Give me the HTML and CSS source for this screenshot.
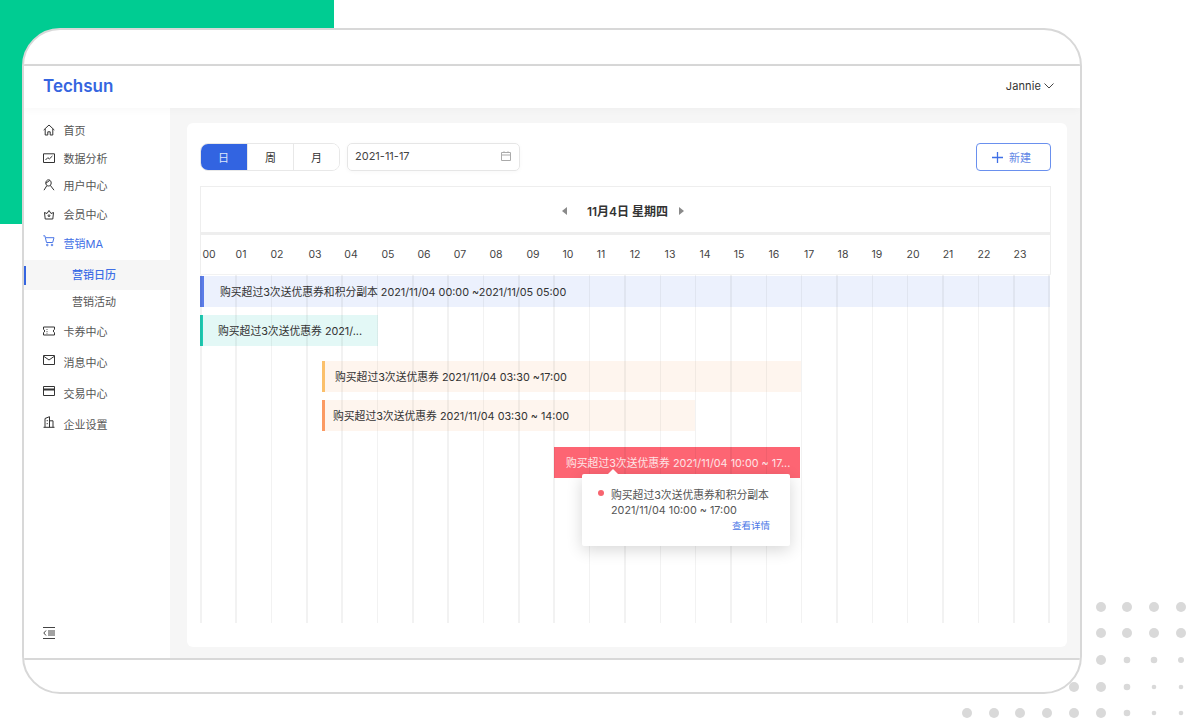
FILE: index.html
```html
<!DOCTYPE html>
<html lang="zh-CN">
<head>
    <meta charset="UTF-8">
    <title>Techsun</title>
    <link rel="stylesheet" href="styles.css">
</head>
<body>
    <div class="green-block"></div>

    <svg class="dots" width="230" height="125" viewBox="956 598 230 125" fill="#d9d9d9">
        <circle cx="1101" cy="607" r="5"/><circle cx="1127" cy="607" r="5"/><circle cx="1154" cy="607" r="5"/><circle cx="1181" cy="607" r="5"/>
        <circle cx="1101" cy="633" r="5"/><circle cx="1127" cy="633" r="5"/><circle cx="1154" cy="633" r="5"/><circle cx="1181" cy="633" r="5"/>
        <circle cx="1101" cy="660" r="5"/><circle cx="1127" cy="660" r="3.3"/><circle cx="1154" cy="660" r="3.3"/><circle cx="1181" cy="660" r="3"/>
        <circle cx="1074" cy="687" r="5"/><circle cx="1101" cy="687" r="5"/><circle cx="1127" cy="687" r="3.3"/><circle cx="1154" cy="687" r="2.3"/><circle cx="1181" cy="687" r="2.3"/>
        <circle cx="967" cy="713" r="5"/><circle cx="994" cy="713" r="5"/><circle cx="1020" cy="713" r="5"/><circle cx="1047" cy="713" r="5"/><circle cx="1074" cy="713" r="5"/><circle cx="1101" cy="713" r="5"/><circle cx="1127" cy="713" r="3.3"/><circle cx="1154" cy="713" r="2.3"/><circle cx="1181" cy="713" r="2.3"/>
    </svg>

    <div class="device">
        <div class="bezel-top"></div>

        <header class="topbar">
            <div class="logo">Techsun</div>
            <div class="user">Jannie
                <svg width="10" height="6" viewBox="0 0 10 6" fill="none" stroke="#444" stroke-width="1"><path d="M.5.5 5 5 9.500.5"/></svg>
            </div>
        </header>

        <div class="main">
            <aside class="sidebar">
                <nav class="nav">
                    <a class="nav-item">
                        <svg class="nav-icon" viewBox="0 0 12 12" fill="none" stroke="#333" stroke-width="1"><path d="M.7 6 6 1l5.300 5M2.200 5v6h2.600V7.800h2.400V11h2.600V5"/></svg>
                        首页
                    </a>
                    <a class="nav-item">
                        <svg class="nav-icon" viewBox="0 0 12 12" fill="none" stroke="#333" stroke-width="1"><path d="M.5 1.800h11v8.700H.5z"/><path d="m2.500 8 2.300-2.300 1.600 1.200 3-2.900"/></svg>
                        数据分析
                    </a>
                    <a class="nav-item">
                        <svg class="nav-icon" viewBox="0 0 12 12" fill="none" stroke="#333" stroke-width="1"><path d="M2.800 4C2.800 2.300 4 .8 5.500.8S8.200 2.300 8.200 4 7 7 5.500 7 2.800 5.700 2.800 4zM2.800 4.200 6.800 1.400M1 11.200 4 6.400M11 11.200 7.200 6.200"/></svg>
                        用户中心
                    </a>
                    <a class="nav-item">
                        <svg class="nav-icon" viewBox="0 0 12 12" fill="none" stroke="#333" stroke-width="1"><path d="M1.500 4.500 4 5.500 6 2.500l2 3 2.500-1-.7 6.500H2.200z"/><circle cx="6" cy="7.700" r=".9"/></svg>
                        会员中心
                    </a>
                    <a class="nav-item nav-open">
                        <svg class="nav-icon nav-icon-up" viewBox="0 0 12 12" fill="none" stroke="#4a76e6" stroke-width="1"><path d="M.3.800h1.600l1.600 6.700h6.200l1.300-4.800H3"/><circle cx="4.300" cy="10" r=".8"/><circle cx="9" cy="10" r=".8"/></svg>
                        营销MA
                    </a>
                    <a class="nav-sub nav-active">营销日历</a>
                    <a class="nav-sub">营销活动</a>
                    <a class="nav-item">
                        <svg class="nav-icon" viewBox="0 0 12 12" fill="none" stroke="#333" stroke-width="1"><path d="M.5 2h11v2.400c-1.500.4-1.500 2.800 0 3.200V10H.5V7.600c1.500-.4 1.500-2.800 0-3.200z"/><path d="M4 4v.8M4 6v.8M4 7.800v.8"/></svg>
                        卡券中心
                    </a>
                    <a class="nav-item">
                        <svg class="nav-icon nav-icon-up" viewBox="0 0 12 12" fill="none" stroke="#333" stroke-width="1"><path d="M.5 1.500h11v9H.5z"/><path d="M1 2.500 6 6l5-3.500"/></svg>
                        消息中心
                    </a>
                    <a class="nav-item">
                        <svg class="nav-icon nav-icon-up" viewBox="0 0 12 12" fill="none" stroke="#333" stroke-width="1"><path d="M.5 1.500h11v9H.5z"/><path d="M.5 4.500h11" stroke-width="2"/></svg>
                        交易中心
                    </a>
                    <a class="nav-item">
                        <svg class="nav-icon nav-icon-up" viewBox="0 0 12 12" fill="none" stroke="#333" stroke-width="1"><path d="M.5 11.300h11M2 11.300V2.500L6.500.7v10.600M6.500 4.800h3.500v6.500M4.200 4v1.200M4.200 7v1.200"/></svg>
                        企业设置
                    </a>
                </nav>
                <svg class="collapse" width="12" height="12" viewBox="0 0 12 12" fill="none" stroke="#444" stroke-width="1"><path d="M0 .5h12M0 11.500h12M5 4h7M5 6h7M5 8h7M3 3.500.8 6 3 8.500"/></svg>
            </aside>

            <section class="card">
                <div class="toolbar">
                    <div class="seg">
                        <button class="seg-btn seg-active">日</button>
                        <button class="seg-btn">周</button>
                        <button class="seg-btn">月</button>
                    </div>
                    <div class="date-box">
                        <span>2021-11-17</span>
                        <svg width="10" height="10" viewBox="0 0 10 10" fill="none" stroke="#aaa" stroke-width="1"><path d="M.5 1.500h9v8h-9zM.5 4h9M3 .3v1.500M7 .3v1.500"/></svg>
                    </div>
                    <button class="new-btn">
                        <svg width="11" height="11" viewBox="0 0 11 11" fill="none" stroke="#3f6fe6" stroke-width="1.300"><path d="M5.500 0v11M0 5.500h11"/></svg>
                        新建
                    </button>
                </div>

                <div class="chart">
                    <div class="chart-head">
                        <span class="arrow arrow-left"></span>
                        <span class="chart-title">11月4日 星期四</span>
                        <span class="arrow arrow-right"></span>
                    </div>
                    <div class="hours">
                        <span style="left: 8px">00</span>
                        <span style="left: 40px">01</span>
                        <span style="left: 76px">02</span>
                        <span style="left: 114px">03</span>
                        <span style="left: 150px">04</span>
                        <span style="left: 187px">05</span>
                        <span style="left: 223px">06</span>
                        <span style="left: 259px">07</span>
                        <span style="left: 295px">08</span>
                        <span style="left: 332px">09</span>
                        <span style="left: 367px">10</span>
                        <span style="left: 400px">11</span>
                        <span style="left: 434px">12</span>
                        <span style="left: 469px">13</span>
                        <span style="left: 504px">14</span>
                        <span style="left: 538px">15</span>
                        <span style="left: 573px">16</span>
                        <span style="left: 608px">17</span>
                        <span style="left: 642px">18</span>
                        <span style="left: 676px">19</span>
                        <span style="left: 712px">20</span>
                        <span style="left: 747px">21</span>
                        <span style="left: 783px">22</span>
                        <span style="left: 819px">23</span>
                    </div>
                    <div class="timeline">
                        <div class="event event-blue" style="left: 0; top: 1px; width: 850px">购买超过3次送优惠券和积分副本 2021/11/04 00:00 ~2021/11/05 05:00</div>
                        <div class="event event-teal" style="left: 0; top: 40px; width: 178px">购买超过3次送优惠券 2021/...</div>
                        <div class="event event-yellow" style="left: 122px; top: 86px; width: 479px">购买超过3次送优惠券 2021/11/04 03:30 ~17:00</div>
                        <div class="event event-orange" style="left: 122px; top: 125px; width: 373px">购买超过3次送优惠券 2021/11/04 03:30 ~ 14:00</div>
                        <div class="event event-red" style="left: 354px; top: 172px; width: 246px">购买超过3次送优惠券 2021/11/04 10:00 ~ 17...</div>
                        <div class="grid-lines"></div>
                        <div class="popover">
                            <div class="popover-title">购买超过3次送优惠券和积分副本<br>2021/11/04 10:00 ~ 17:00</div>
                            <a class="popover-link">查看详情</a>
                        </div>
                    </div>
                </div>
            </section>
        </div>

        <div class="bezel-bottom"></div>
    </div>
</body>
</html>
```

FILE: styles.css
```css
* {
    box-sizing: border-box;
}

body {
    position: relative;
    width: 1186px;
    height: 718px;
    margin: 0;
    padding: 28px 0 0 22px;
    overflow: hidden;
    background-color: #fff;
    font-family: Inter, "Noto Sans CJK SC", sans-serif;
    font-size: 11px;
    color: #333;
}

/* Decorations behind the device */
.green-block {
    position: absolute;
    left: 0;
    top: 0;
    width: 334px;
    height: 224px;
    background-color: #00cc92;
}

.dots {
    position: absolute;
    left: 956px;
    top: 598px;
}

/* Device frame */
.device {
    position: relative;
    display: flex;
    flex-direction: column;
    width: 1060px;
    height: 666px;
    overflow: hidden;
    border: 2px solid #d8d8d8;
    border-radius: 38px;
    background-color: #fff;
}

.bezel-top {
    flex: none;
    height: 36px;
    border-bottom: 2px solid #d8d8d8;
}

.bezel-bottom {
    flex: none;
    height: 34px;
    border-top: 2px solid #d8d8d8;
}

/* Top bar */
.topbar {
    position: relative;
    z-index: 1;
    flex: none;
    display: flex;
    align-items: center;
    justify-content: space-between;
    height: 42px;
    padding: 0 26px 3px 19px;
    background-color: #fff;
    box-shadow: 0 2px 8px rgba(0, 0, 0, 0.03);
}

.logo {
    font-size: 17px;
    font-weight: 600;
    color: #3565e0;
}

.user {
    display: flex;
    align-items: center;
    gap: 3px;
    letter-spacing: 0.1px;
}

/* Main area */
.main {
    flex: 1;
    display: flex;
    min-height: 0;
    background-color: #f6f6f6;
}

.sidebar {
    flex: none;
    display: flex;
    flex-direction: column;
    justify-content: space-between;
    width: 146px;
    padding: 12px 0 19px;
    background-color: #fff;
}

.nav {
    display: flex;
    flex-direction: column;
}

.nav-item {
    display: flex;
    align-items: center;
    gap: 8.500px;
    height: 20px;
    padding-left: 19px;
    color: #555;
}

.nav-item:nth-child(2) { margin-top: 8px; }
.nav-item:nth-child(3) { margin-top: 7px; }
.nav-item:nth-child(4) { margin-top: 9px; }
.nav-item:nth-child(5) { margin-top: 9px; }
.nav-item:nth-child(8) { margin-top: 10px; }
.nav-item:nth-child(9) { margin-top: 11px; }
.nav-item:nth-child(10) { margin-top: 11px; }
.nav-item:nth-child(11) { margin-top: 11px; }

.nav-icon {
    flex: none;
    width: 12px;
    height: 12px;
}

.nav-icon-up {
    margin-top: -4px;
}

.nav-open {
    color: #3f6fe6;
}

.nav-sub {
    display: flex;
    align-items: center;
    height: 20px;
    padding-left: 48px;
    color: #555;
}

.nav-active {
    position: relative;
    height: 30px;
    margin-top: 7px;
    padding-bottom: 2px;
    margin-bottom: 1px;
    background-color: #f6f6f6;
    color: #3f6fe6;
    font-weight: 500;
}

.nav-active::before {
    content: "";
    position: absolute;
    left: 0;
    top: 6px;
    width: 1.500px;
    height: 19px;
    background-color: #3565e0;
}

.collapse {
    margin-left: 19px;
}

/* Card */
.card {
    flex: none;
    width: 880px;
    height: 524px;
    margin: 15px 0 0 17px;
    padding: 20px 16px 0 13px;
    border-radius: 6px;
    background-color: #fff;
}

.toolbar {
    display: flex;
    height: 28px;
}

.seg {
    display: flex;
    width: 140px;
    border: 1px solid #e8e8e8;
    border-radius: 8px;
    overflow: hidden;
}

.seg-btn {
    flex: 1;
    padding: 0;
    border: none;
    border-left: 1px solid #e8e8e8;
    background-color: #fff;
    font: inherit;
    color: #333;
}

.seg-btn:first-child {
    flex: none;
    width: 47px;
    margin: -1px 0 -1px -1px;
    border-left: none;
}

.seg-active {
    background-color: #3264e1;
    color: #dfe7fb;
}

.date-box {
    display: flex;
    align-items: center;
    justify-content: space-between;
    width: 173px;
    margin-left: 7px;
    padding: 0 8px 2px 7px;
    border: 1px solid #e6e6e6;
    border-radius: 5px;
    box-shadow: 0 1px 4px rgba(0, 0, 0, 0.03);
    color: #444;
}

.new-btn {
    display: flex;
    align-items: center;
    justify-content: center;
    gap: 6px;
    width: 75px;
    margin-left: auto;
    padding: 0 4px 0 0;
    border: 1px solid #6a90ee;
    border-radius: 4px;
    background-color: #fff;
    font: inherit;
    color: #6488e6;
}

/* Chart */
.chart {
    width: 851px;
    margin-top: 15px;
}

.chart-head {
    display: flex;
    align-items: center;
    justify-content: center;
    height: 49px;
    padding: 2px 5px 0 0;
    border: 1px solid #eee;
    border-bottom-width: 3px;
}

.chart-title {
    margin: 0 11px 0 20px;
    font-size: 12px;
    font-weight: 600;
    color: #333;
}

.arrow {
    width: 0;
    height: 0;
    border-top: 4.500px solid transparent;
    border-bottom: 4.500px solid transparent;
}

.arrow-left {
    border-right: 5px solid #8a8a8a;
}

.arrow-right {
    border-left: 5px solid #8a8a8a;
}

.hours {
    position: relative;
    height: 39px;
    border-left: 1px solid #eee;
    border-right: 1px solid #eee;
}

.hours span {
    position: absolute;
    top: 13px;
    transform: translateX(-50%);
    font-size: 10.500px;
    color: #444;
}

.timeline {
    position: relative;
    height: 349px;
    border-top: 1px solid #f2f2f2;
}

.event {
    position: absolute;
    height: 31px;
    line-height: 33px;
    font-size: 10.800px;
    white-space: nowrap;
    overflow: hidden;
    color: #333;
}

.event-blue {
    padding-left: 16px;
    border-left: 4px solid #5b7ce8;
    background-color: #ecf1fd;
}

.event-teal {
    padding-left: 15px;
    border-left: 3px solid #1fcbb3;
    background-color: #e3f8f6;
}

.event-yellow {
    padding-left: 10px;
    border-left: 3px solid #fbc06b;
    background-color: #fef5ee;
}

.event-orange {
    padding-left: 8px;
    border-left: 3px solid #fb9a63;
    background-color: #fef5ee;
}

.event-red {
    padding-left: 12px;
    background-color: #fd6573;
    color: #fde4e6;
}

.grid-lines {
    position: absolute;
    inset: 0;
    background-image: repeating-linear-gradient(to right, rgba(0, 0, 0, 0.05) 0, rgba(0, 0, 0, 0.05) 1.500px, transparent 1.500px, transparent 35.350px);
}

.popover {
    position: absolute;
    left: 382px;
    top: 199px;
    width: 208px;
    height: 72px;
    padding: 14px 20px 0 29px;
    border-radius: 2px;
    background-color: #fff;
    box-shadow: 0 4px 16px rgba(0, 0, 0, 0.16);
    color: #555;
    line-height: 15px;
}

.popover::before {
    content: "";
    position: absolute;
    left: 26px;
    top: -5px;
    border-left: 5px solid transparent;
    border-right: 5px solid transparent;
    border-bottom: 5px solid #fff;
}

.popover::after {
    content: "";
    position: absolute;
    left: 16px;
    top: 16px;
    width: 6px;
    height: 6px;
    border-radius: 50%;
    background-color: #f7646f;
}

.popover-title {
    font-size: 10.800px;
    white-space: nowrap;
}

.popover-link {
    display: block;
    text-align: right;
    font-size: 9.500px;
    color: #4a76e6;
}
```
